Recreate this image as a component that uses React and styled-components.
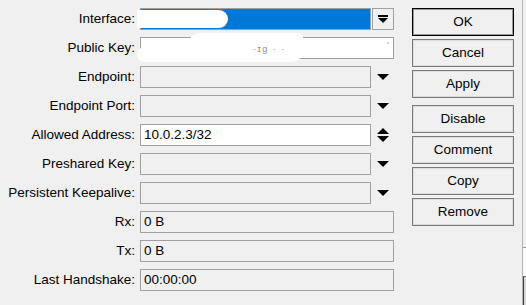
import React from "react";
import styled, { createGlobalStyle } from "styled-components";

const GlobalStyle = createGlobalStyle`
  html, body {
    margin: 0;
    padding: 0;
    background: #f0f0f0;
  }
  body {
    font-family: "Liberation Sans", Arial, sans-serif;
    font-size: 13.5px;
    color: #000;
    overflow: hidden;
  }
`;

const Window = styled.div`
  display: flex;
  width: 526px;
  height: 305px;
  background: #f0f0f0;
`;

const Dialog = styled.div`
  display: flex;
  align-items: flex-start;
  width: 523px;
  height: 305px;
  padding-top: 8px;
  box-sizing: border-box;
  border-right: 1px solid #b4b4b4;
`;

const Edge = styled.div`
  flex: 1;
  display: flex;
  flex-direction: column;
`;

const EdgeTop = styled.div`
  height: 247px;
  background: #f0f0f0;
  border-bottom: 1px solid #9a9a9a;
`;

const EdgeMid = styled.div`
  height: 28px;
  background: #fafafa;
  border-bottom: 1px solid #6a6a6a;
`;

const EdgeBottom = styled.div`
  flex: 1;
  background: #d8d8d8;
  border-left: 1px solid #404040;
`;

const Form = styled.div`
  display: grid;
  grid-template-columns: 135px 254px;
  column-gap: 5px;
  row-gap: 7px;
  width: 394px;
`;

const Label = styled.div`
  height: 22px;
  line-height: 22px;
  text-align: right;
  white-space: nowrap;
`;

const FieldRow = styled.div`
  display: flex;
  align-items: center;
  height: 22px;
  gap: 1px;
`;

const Field = styled.div`
  position: relative;
  box-sizing: border-box;
  height: 22px;
  width: ${(p) => (p.$short ? "231px" : "254px")};
  border: 1px solid #a0a0a0;
  background: ${(p) =>
    p.$selected ? "#0078d7" : p.$editable ? "#ffffff" : "#f0f0f0"};
  padding-left: 3px;
  line-height: 20px;
  white-space: nowrap;
  color: ${(p) => (p.$selected ? "#fff" : "#000")};
`;

const Blot = styled.span`
  position: absolute;
  background: #ffffff;
  border-radius: ${(p) => p.$radius || "0 12px 12px 0"};
  filter: blur(0.6px);
`;

const Leftover = styled.span`
  position: absolute;
  top: 6px;
  font-size: 9px;
  line-height: 10px;
  color: #8a8a8a;
  letter-spacing: 1.5px;
`;

const PickButton = styled.div`
  box-sizing: border-box;
  width: 22px;
  height: 22px;
  border: 1px solid #a0a0a0;
  display: flex;
  align-items: center;
  justify-content: center;
`;

const ArrowSlot = styled.div`
  width: 22px;
  height: 22px;
  display: flex;
  align-items: center;
  justify-content: center;
`;

const Buttons = styled.div`
  display: flex;
  flex-direction: column;
  gap: 3px;
  margin-left: 18px;
  width: 102px;
`;

const Button = styled.div`
  box-sizing: border-box;
  height: 28px;
  margin-top: ${(p) => (p.$spaced ? "4px" : "0")};
  border: 1px solid ${(p) => (p.$default ? "#000000" : "#7a7a7a")};
  box-shadow: inset 0 0 0 1px ${(p) => (p.$default ? "#9a9a9a" : "#dcdcdc")};
  background: #f0f0f0;
  display: flex;
  align-items: center;
  justify-content: center;
  padding-bottom: 1px;
`;

const DownArrow = () => (
  <svg width="12" height="7" viewBox="0 0 12 7">
    <polygon points="0,0 12,0 6,6" fill="#000" />
  </svg>
);

const UpDownArrow = () => (
  <svg width="12" height="14" viewBox="0 0 12 14">
    <polygon points="6,0 12,6 0,6" fill="#000" />
    <polygon points="0,8 12,8 6,14" fill="#000" />
  </svg>
);

const BarArrow = () => (
  <svg width="10" height="9" viewBox="0 0 10 9">
    <rect x="0" y="0" width="10" height="2" fill="#000" />
    <polygon points="0,3 10,3 5,8" fill="#000" />
  </svg>
);

const App = () => {
  return (
    <>
      <GlobalStyle />
      <Window>
        <Dialog>
          <Form>
            <Label>Interface:</Label>
            <FieldRow>
              <Field $short $selected>
                <Blot style={{ left: -4, top: 1, width: 91, height: 18 }} />
              </Field>
              <PickButton>
                <BarArrow />
              </PickButton>
            </FieldRow>

            <Label>Public Key:</Label>
            <FieldRow>
              <Field $editable>
                <Blot
                  style={{ left: 48, top: -5, width: 114, height: 27 }}
                  $radius="10px 4px 10px 12px"
                />
                <Blot
                  style={{ left: -4, top: 9, width: 165, height: 15 }}
                  $radius="8px 0 10px 8px"
                />
                <Leftover style={{ left: 112 }}>·ɪɡ · ·</Leftover>
                <Leftover style={{ left: 246, top: 2, color: "#b08020" }}>'</Leftover>
              </Field>
            </FieldRow>

            <Label>Endpoint:</Label>
            <FieldRow>
              <Field $short />
              <ArrowSlot>
                <DownArrow />
              </ArrowSlot>
            </FieldRow>

            <Label>Endpoint Port:</Label>
            <FieldRow>
              <Field $short />
              <ArrowSlot>
                <DownArrow />
              </ArrowSlot>
            </FieldRow>

            <Label>Allowed Address:</Label>
            <FieldRow>
              <Field $short $editable>
                10.0.2.3/32
              </Field>
              <ArrowSlot>
                <UpDownArrow />
              </ArrowSlot>
            </FieldRow>

            <Label>Preshared Key:</Label>
            <FieldRow>
              <Field $short />
              <ArrowSlot>
                <DownArrow />
              </ArrowSlot>
            </FieldRow>

            <Label>Persistent Keepalive:</Label>
            <FieldRow>
              <Field $short />
              <ArrowSlot>
                <DownArrow />
              </ArrowSlot>
            </FieldRow>

            <Label>Rx:</Label>
            <FieldRow>
              <Field>0 B</Field>
            </FieldRow>

            <Label>Tx:</Label>
            <FieldRow>
              <Field>0 B</Field>
            </FieldRow>

            <Label>Last Handshake:</Label>
            <FieldRow>
              <Field>00:00:00</Field>
            </FieldRow>
          </Form>

          <Buttons>
            <Button $default>OK</Button>
            <Button>Cancel</Button>
            <Button>Apply</Button>
            <Button $spaced>Disable</Button>
            <Button>Comment</Button>
            <Button>Copy</Button>
            <Button>Remove</Button>
          </Buttons>
        </Dialog>
        <Edge>
          <EdgeTop />
          <EdgeMid />
          <EdgeBottom />
        </Edge>
      </Window>
    </>
  );
};

export default App;
